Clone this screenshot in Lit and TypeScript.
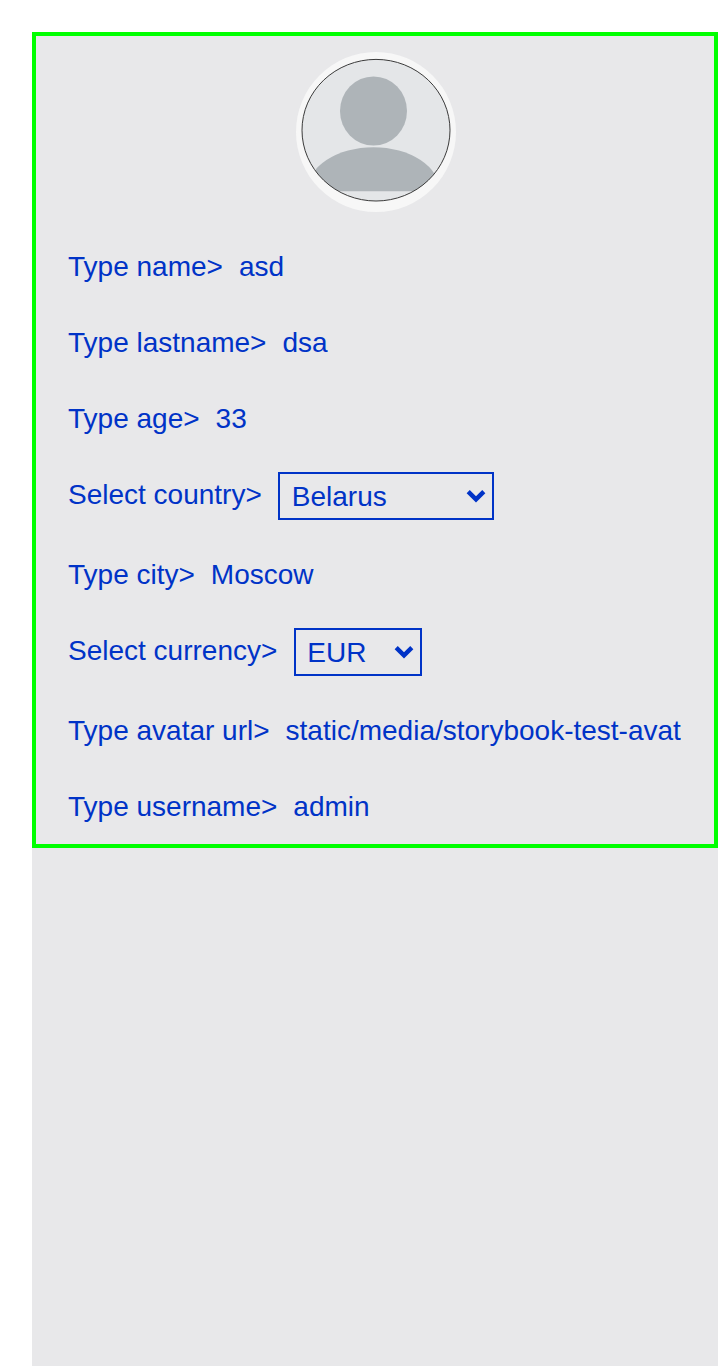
import { LitElement, html, css, svg } from "lit";
import { customElement, property } from "lit/decorators.js";

@customElement("profile-avatar")
class ProfileAvatar extends LitElement {
  static styles = css`
    :host { display: block; width: 160px; height: 160px; }
    .picture { display: block; border-radius: 50%; background: #f7f7f7; }
  `;
  render() {
    return html`<svg class="picture" width="160" height="160" viewBox="0 0 160 160">
      <defs><clipPath id="frame"><ellipse cx="80" cy="78.2" rx="74" ry="70.8" /></clipPath></defs>
      ${svg`<g clip-path="url(#frame)">
        <rect width="160" height="160" fill="#e4e6e8" />
        <ellipse cx="77.5" cy="59" rx="33.5" ry="34.6" fill="#aeb4b8" />
        <path d="M11 139.3A66.5 44.1 0 0 1 144 139.3Z" fill="#aeb4b8" />
      </g>
      <ellipse cx="80" cy="78.2" rx="74" ry="70.8" fill="none" stroke="#3a3a3a" stroke-width="1" />`}
    </svg>`;
  }
}

@customElement("profile-field")
class ProfileField extends LitElement {
  @property() label = "";
  @property() value = "";
  static styles = css`
    :host { display: flex; gap: 16px; height: 44px; padding-top: 7px; box-sizing: border-box; line-height: 32px; white-space: nowrap; }
    .value { overflow: hidden; }
  `;
  render() {
    return html`<span>${this.label}&gt;</span><span class="value">${this.value}</span>`;
  }
}

@customElement("profile-select")
class ProfileSelect extends LitElement {
  @property() label = "";
  @property() value = "";
  @property({ type: Boolean, reflect: true }) compact = false;
  static styles = css`
    :host { display: flex; gap: 16px; height: 48px; line-height: 32px; white-space: nowrap; }
    .label { padding-top: 7px; }
    .box {
      display: flex; justify-content: space-between; align-items: flex-start;
      width: 216px; height: 48px; box-sizing: border-box;
      border: 2px solid #0033c7; padding: 7px 7px 0 12px;
    }
    :host([compact]) { gap: 16.6px; }
    :host([compact]) .box { width: 128px; padding-left: 11.4px; }
    .chevron { display: block; margin-top: 9px; overflow: visible; }
  `;
  render() {
    return html`<span class="label">${this.label}&gt;</span>
      <div class="box">
        <span>${this.value}</span>
        <svg class="chevron" width="18" height="14" viewBox="0 0 18 14">
          <path d="M1.2 1.6L9 9.4L16.8 1.6" fill="none" stroke="#0033c7" stroke-width="4.4" />
        </svg>
      </div>`;
  }
}

@customElement("app-root")
class AppRoot extends LitElement {
  static styles = css`
    :host {
      display: block; box-sizing: border-box; height: 1366px; padding: 32px 0 0 32px; overflow: hidden;
      background: #fff; color: #0033c7; font: 28px "Liberation Sans", Arial, sans-serif;
    }
    .page { height: 100%; background: #e8e8ea; }
    .card {
      display: flex; flex-direction: column; gap: 32px; box-sizing: border-box;
      border: 4px solid #00ff00; padding: 16px 32px;
    }
    .avatar { align-self: center; margin-left: 2px; }
  `;
  render() {
    return html`<main class="page">
      <section class="card">
        <profile-avatar class="avatar"></profile-avatar>
        <profile-field label="Type name" value="asd"></profile-field>
        <profile-field label="Type lastname" value="dsa"></profile-field>
        <profile-field label="Type age" value="33"></profile-field>
        <profile-select label="Select country" value="Belarus"></profile-select>
        <profile-field label="Type city" value="Moscow"></profile-field>
        <profile-select label="Select currency" value="EUR" compact></profile-select>
        <profile-field label="Type avatar url" value="static/media/storybook-test-avat"></profile-field>
        <profile-field label="Type username" value="admin"></profile-field>
      </section>
    </main>`;
  }
}
